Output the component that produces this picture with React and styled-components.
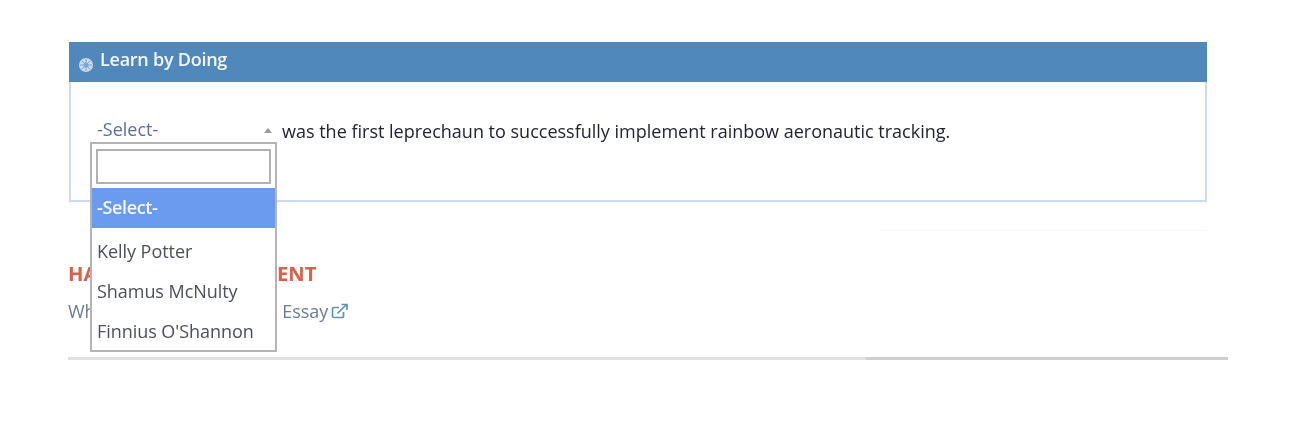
import React from 'react';
import styled, { createGlobalStyle } from 'styled-components';

const Global = createGlobalStyle`
  html, body {
    margin: 0;
    background: #fff;
    font-family: 'Open Sans', 'Liberation Sans', sans-serif;
  }
`;

const Page = styled.div`
  width: 1292px;
  height: 426px;
  box-sizing: border-box;
  padding: 42px 0 0 68px;
  overflow: hidden;
  filter: blur(0.6px);
`;

const Panel = styled.section`
  width: 1138px;
  height: 160px;
  margin-left: 1px;
  box-sizing: border-box;
  border: 2px solid #c9dbf8;
  border-top: 0;
`;

const PanelHeader = styled.header`
  display: flex;
  align-items: flex-start;
  gap: 6px;
  height: 40px;
  margin: 0 -2px;
  padding: 5px 0 0 9px;
  box-sizing: border-box;
  background: #5088bc;
  color: #f2f6fb;
  font-size: 18px;
  line-height: 24px;
  font-weight: 600;
  letter-spacing: -0.25px;
`;

const PanelBody = styled.div`
  display: flex;
  align-items: flex-start;
  padding: 35px 0 0 19px;
`;

const SelectWrap = styled.div`
  position: relative;
  width: 192px;
  flex-shrink: 0;
`;

const SelectTrigger = styled.div`
  display: flex;
  align-items: center;
  justify-content: space-between;
  width: 175px;
  padding-left: 7px;
  height: 24px;
  font-size: 18px;
  color: #5f6d9c;
`;

const Caret = styled.span`
  width: 0;
  height: 0;
  margin-top: 3px;
  border-left: 4px solid transparent;
  border-right: 4px solid transparent;
  border-bottom: 5px solid #9a9a9a;
`;

const Dropdown = styled.div`
  position: absolute;
  top: 25px;
  left: 0;
  z-index: 5;
  width: 187px;
  height: 210px;
  box-sizing: border-box;
  border: 2px solid #b4b4b4;
  background: #fff;
`;

const SearchBox = styled.div`
  height: 44px;
  box-sizing: border-box;
  padding: 5px 4px 4px;
`;

const SearchInput = styled.input`
  display: block;
  width: 100%;
  height: 35px;
  box-sizing: border-box;
  border: 2px solid #b2b2b2;
  border-radius: 0;
  background: #fff;
  outline: none;
`;

const Option = styled.div`
  display: flex;
  align-items: center;
  height: 40px;
  box-sizing: border-box;
  padding: ${props => (props.$active ? '0 0 2px 5px' : '0 0 0 5px')};
  font-size: 18px;
  letter-spacing: ${props => (props.$active ? '-0.35px' : '-0.05px')};
  color: ${props => (props.$active ? '#f4f7fe' : '#4d4f5c')};
  background: ${props => (props.$active ? '#6a9bee' : 'transparent')};
  font-weight: ${props => (props.$active ? 600 : 400)};
`;

const ActiveSpacer = styled.div`
  height: 3px;
`;

const Sentence = styled.span`
  font-size: 18px;
  line-height: 24px;
  padding-top: 2px;
  color: #22252f;
`;

const FaintRule = styled.div`
  width: 327px;
  height: 1px;
  margin: 28px 0 0 812px;
  background: #f8f8f8;
`;

const Assignment = styled.div`
  width: 1160px;
  margin-top: 29px;
`;

const AssignmentTitle = styled.h3`
  margin: 0;
  font-size: 20.2px;
  line-height: 26px;
  font-weight: 700;
  color: #d9604a;
  white-space: nowrap;
`;

const AssignmentLink = styled.a`
  display: flex;
  align-items: center;
  gap: 3px;
  margin-top: 13px;
  font-size: 18px;
  line-height: 24px;
  color: #6d7a94;
`;

const Rule = styled.div`
  display: flex;
  width: 1160px;
  height: 3px;
  margin-top: 34px;
`;

const RulePart = styled.div`
  flex: ${props => props.$grow};
  background: ${props => props.$color};
`;

function LessonIcon() {
  return (
    <svg width="16" height="16" viewBox="0 0 16 16" style={{ marginTop: 10, flexShrink: 0 }}>
      <circle cx="8" cy="8" r="7" fill="#c9d9ea" />
      <circle cx="8" cy="8" r="2.6" fill="#7fa6cc" />
      <path d="M8 2v12M2 8h12M3.8 3.8l8.4 8.4M12.2 3.8l-8.4 8.4" stroke="#7fa6cc" strokeWidth="1" />
    </svg>
  );
}

function ExternalIcon() {
  return (
    <svg width="18" height="16" viewBox="0 0 18 16" fill="none" stroke="#5f93b8" strokeWidth="1.7">
      <path d="M12.500 9v4a1.500 1.500 0 0 1-1.500 1.500H3A1.500 1.500 0 0 1 1.500 13V6A1.500 1.500 0 0 1 3 4.500h5" />
      <path d="M6.500 10.500 15 2" />
      <path d="M10.500 1.500h5.500V7" />
    </svg>
  );
}

const options = ['Kelly Potter', 'Shamus McNulty', "Finnius O'Shannon"];

export default function App() {
  return (
    <Page>
      <Global />
      <Panel>
        <PanelHeader>
          <LessonIcon />
          Learn by Doing
        </PanelHeader>
        <PanelBody>
          <SelectWrap>
            <SelectTrigger>
              -Select-
              <Caret />
            </SelectTrigger>
            <Dropdown>
              <SearchBox>
                <SearchInput />
              </SearchBox>
              <Option $active>-Select-</Option>
              <ActiveSpacer />
              {options.map(name => (
                <Option key={name}>{name}</Option>
              ))}
            </Dropdown>
          </SelectWrap>
          <Sentence>was the first leprechaun to successfully implement rainbow aeronautic tracking.</Sentence>
        </PanelBody>
      </Panel>
      <FaintRule />
      <Assignment>
        <AssignmentTitle>HANDS-ON ASSIGNMENT</AssignmentTitle>
        <AssignmentLink>
          What Makes a Successful Essay
          <ExternalIcon />
        </AssignmentLink>
      </Assignment>
      <Rule>
        <RulePart $grow="798" $color="#e0e0e0" />
        <RulePart $grow="362" $color="#cfcfcf" />
      </Rule>
    </Page>
  );
}
